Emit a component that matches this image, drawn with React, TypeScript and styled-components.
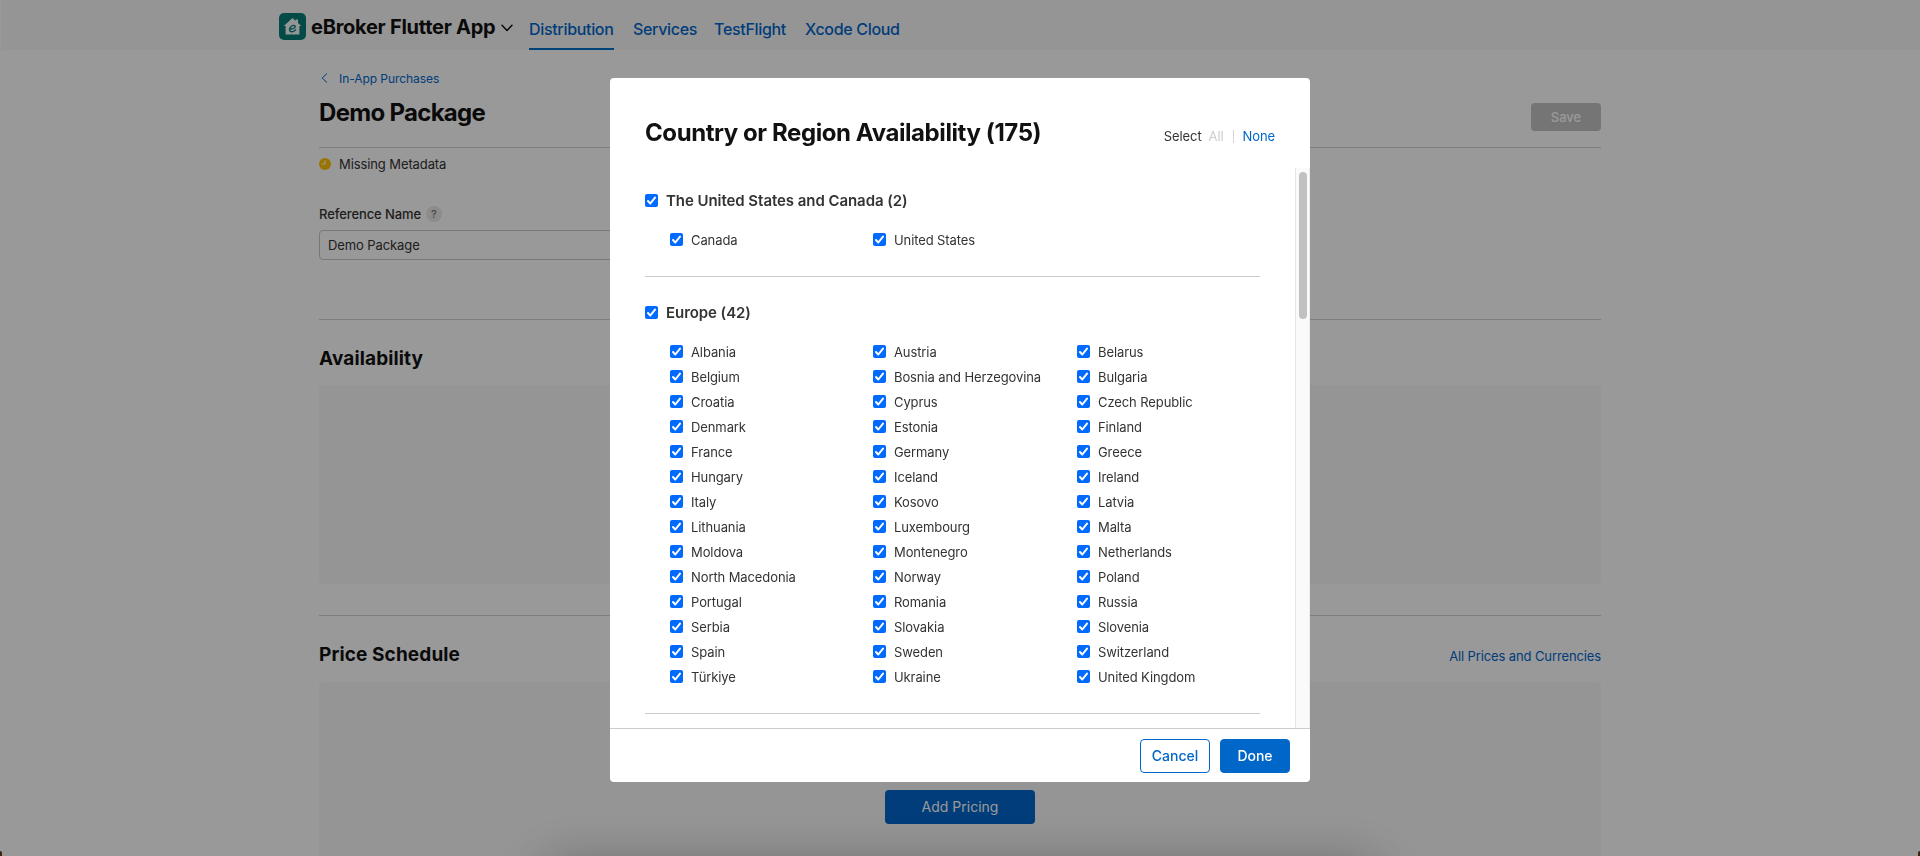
import React from 'react';
import styled, { createGlobalStyle } from 'styled-components';

const Global = createGlobalStyle`
  * { box-sizing: border-box; }
  html, body { margin: 0; padding: 0; height: 856px; overflow: hidden; background: #fff; }
  body { font-family: Inter, "Liberation Sans", sans-serif; color: #333; font-size: 13px; letter-spacing: -0.1px; }
  h1, h2, h3, p { margin: 0; }
  button { font-family: inherit; padding: 0 0 1px; }
`;

const Page = styled.div`
  height: 856px;
  overflow: hidden;
  border-left: 1px solid #fff;
`;

const Header = styled.header`
  height: 50px;
  padding-left: 278px;
  display: flex;
  background: #f9f9f9;
`;

const AppIcon = styled.svg`
  width: 27px;
  height: 27px;
  margin-top: 13px;
  flex: none;
`;

const AppName = styled.div`
  width: 184px;
  margin-left: 5px;
  padding-top: 15px;
  font-size: 20px;
  line-height: 24px;
  font-weight: 700;
  letter-spacing: -0.26px;
  color: #111;
  white-space: nowrap;
`;

const Caret = styled.svg`
  width: 12px;
  height: 8px;
  margin: 24px 0 0 6px;
`;

const Nav = styled.nav`
  display: flex;
  gap: 19px;
  margin-left: 16px;
`;

const NavLink = styled.a<{ $active?: boolean; $w: number }>`
  width: ${(p) => p.$w}px;
  height: 50px;
  padding-top: 20px;
  font-size: 16px;
  line-height: 19px;
  font-weight: 500;
  letter-spacing: -0.32px;
  white-space: nowrap;
  color: #06c;
  border-bottom: 2px solid ${(p) => (p.$active ? '#0070c9' : 'transparent')};
`;

const Content = styled.main`
  width: 1282px;
  margin-left: 318px;
`;

const Back = styled.a`
  display: flex;
  align-items: center;
  gap: 11px;
  height: 16px;
  margin-top: 20px;
  padding-left: 2px;
  font-size: 12px;
  letter-spacing: -0.06px;
  color: #06c;
`;

const TitleRow = styled.div`
  height: 62px;
  display: flex;
  justify-content: space-between;
  border-bottom: 1px solid #d0d0d0;
`;

const PageTitle = styled.h1`
  margin-top: 12px;
  font-size: 24px;
  line-height: 29px;
  font-weight: 700;
  letter-spacing: -0.7px;
  color: #111;
`;

const Save = styled.button`
  width: 70px;
  height: 28px;
  margin-top: 17px;
  border: 0;
  border-radius: 4px;
  background: #c4c4c4;
  color: #fff;
  font-size: 13px;
  font-weight: 500;
`;

const Status = styled.div`
  display: flex;
  align-items: center;
  gap: 8px;
  height: 16px;
  margin-top: 8px;
  line-height: 16px;
`;

const Label = styled.div`
  display: flex;
  align-items: center;
  gap: 5px;
  height: 16px;
  margin-top: 34px;
  font-weight: 500;
`;

const Help = styled.span`
  width: 16px;
  height: 16px;
  border-radius: 50%;
  background: #eaeaea;
  color: #777;
  font-size: 11px;
  line-height: 16px;
  text-align: center;
`;

const Field = styled.div`
  width: 628px;
  height: 30px;
  margin-top: 8px;
  padding-left: 8px;
  border: 1px solid #c8c8c8;
  border-radius: 4px;
  line-height: 29px;
`;

const Section = styled.section<{ $gap: number }>`
  margin-top: ${(p) => p.$gap}px;
  border-top: 1px solid #d0d0d0;
`;

const SectionHead = styled.div<{ $h: number }>`
  height: ${(p) => p.$h}px;
  padding-top: 27px;
  display: flex;
  justify-content: space-between;
`;

const SectionTitle = styled.h2`
  font-size: 19px;
  line-height: 24px;
  font-weight: 700;
  letter-spacing: 0.12px;
  color: #111;
`;

const PriceLink = styled.a`
  margin-top: 5px;
  line-height: 16px;
  letter-spacing: -0.12px;
  color: #06c;
`;

const Panel = styled.div<{ $h: number }>`
  height: ${(p) => p.$h}px;
  border-radius: 4px;
  background: #f9f9f9;
  display: flex;
  justify-content: center;
`;

const AddPricing = styled.button`
  width: 150px;
  height: 34px;
  margin-top: 108px;
  border: 0;
  border-radius: 4px;
  background: #06c;
  color: #fff;
  font-size: 14px;
`;

const Backdrop = styled.div`
  position: fixed;
  inset: 0;
  padding-top: 78px;
  background: rgba(0, 0, 0, 0.4);
`;

const DockShadow = styled.div`
  position: fixed;
  left: 540px;
  top: 864px;
  width: 840px;
  height: 40px;
  border-radius: 20px;
  box-shadow: 0 0 52px rgba(0, 0, 0, 0.33);
`;

const Corner = styled.div<{ $right?: boolean }>`
  position: fixed;
  bottom: 0;
  ${(p) => (p.$right ? 'right' : 'left')}: 0;
  width: 2px;
  height: 5px;
  background: #3b2410;
  border-radius: ${(p) => (p.$right ? '2px 0 0 0' : '0 2px 0 0')};
`;

const Dialog = styled.div`
  position: relative;
  width: 700px;
  height: 704px;
  margin: 0 auto;
  border-radius: 4px;
  background: #fff;
  display: flex;
  flex-direction: column;
  overflow: hidden;
`;

const DialogHead = styled.div`
  height: 90px;
  flex: none;
  padding: 40px 35px 0;
  display: flex;
  justify-content: space-between;
`;

const DialogTitle = styled.h2`
  font-size: 24px;
  line-height: 29px;
  font-weight: 700;
  letter-spacing: -0.42px;
  color: #111;
  white-space: nowrap;
`;

const Select = styled.div`
  display: flex;
  margin-top: 10px;
  line-height: 16px;
`;

const SelectAll = styled.span`
  margin-left: 7px;
  color: #ccc;
`;

const Bar = styled.span`
  width: 1px;
  height: 13px;
  margin: 2px 9px 0 9px;
  background: #d6d6d6;
`;

const SelectNone = styled.a`
  color: #06c;
`;

const Body = styled.div`
  flex: 1;
  min-height: 0;
  display: flex;
`;

const Groups = styled.div`
  flex: 1;
  overflow: hidden;
  padding: 0 35px;
`;

const Track = styled.div`
  width: 15px;
  padding: 4px 2px 0 3px;
  background: #fafafa;
  border-left: 1px solid #e6e6e6;
  border-right: 1px solid #ececec;
`;

const Thumb = styled.div`
  width: 8px;
  height: 147px;
  border-radius: 4px;
  background: #c1c1c1;
`;

const Group = styled.section`
  border-bottom: 1px solid #ccc;
  padding: 24px 0 22px;
  & + & { padding-top: 27px; }
`;

const GroupTitle = styled.h3`
  display: flex;
  align-items: center;
  gap: 8px;
  height: 17px;
  font-size: 15px;
  line-height: 17px;
  font-weight: 600;
  letter-spacing: -0.06px;
`;

const Countries = styled.div`
  display: grid;
  grid-template-columns: 203px 204px 204px;
  grid-auto-rows: 25px;
  margin-top: 20px;
  padding-left: 25px;
`;

const Item = styled.label`
  display: flex;
  gap: 8px;
  padding-top: 4px;
  line-height: 15px;
  white-space: nowrap;
`;

const Box = styled.svg`
  width: 13px;
  height: 13px;
  flex: none;
`;

const Footer = styled.footer`
  height: 54px;
  flex: none;
  padding: 10px 20px 0;
  display: flex;
  justify-content: flex-end;
  gap: 10px;
  border-top: 1px solid #ccc;
`;

const FooterButton = styled.button<{ $primary?: boolean }>`
  width: 70px;
  height: 34px;
  border: 1px solid #0066c8;
  border-radius: 4px;
  background: ${(p) => (p.$primary ? '#0066c8' : '#fff')};
  color: ${(p) => (p.$primary ? '#fff' : '#0066c8')};
  font-size: 14px;
  font-weight: 500;
`;

const Check = () => (
  <Box viewBox="0 0 13 13">
    <rect width="13" height="13" rx="2" fill="#006aff" />
    <path d="M3 7 5.3 9.5 10 3.6" fill="none" stroke="#fff" strokeWidth="2" strokeLinecap="round" strokeLinejoin="round" />
  </Box>
);

const groups = [
  { name: 'The United States and Canada (2)', items: ['Canada', 'United States'] },
  {
    name: 'Europe (42)',
    items: [
      'Albania', 'Austria', 'Belarus',
      'Belgium', 'Bosnia and Herzegovina', 'Bulgaria',
      'Croatia', 'Cyprus', 'Czech Republic',
      'Denmark', 'Estonia', 'Finland',
      'France', 'Germany', 'Greece',
      'Hungary', 'Iceland', 'Ireland',
      'Italy', 'Kosovo', 'Latvia',
      'Lithuania', 'Luxembourg', 'Malta',
      'Moldova', 'Montenegro', 'Netherlands',
      'North Macedonia', 'Norway', 'Poland',
      'Portugal', 'Romania', 'Russia',
      'Serbia', 'Slovakia', 'Slovenia',
      'Spain', 'Sweden', 'Switzerland',
      'Türkiye', 'Ukraine', 'United Kingdom',
    ],
  },
];

export default function App() {
  return (
    <>
      <Global />
      <Page>
        <Header>
          <AppIcon viewBox="0 0 27 27">
            <rect width="27" height="27" rx="5" fill="#087c76" />
            <path d="M13.5 5 4.8 13h1.8v8.5h13.8V13h1.8L19 10V6.5h-2.4V8z" fill="#f4fbfa" />
            <path d="M10.4 15.9c2.8.4 6-.7 5.9-2.4-.1-1.3-2-1.5-3.6-.5-1.8 1.2-2.8 3.6-1.7 5 1.2 1.5 4.1.6 5.6-1.2" fill="none" stroke="#087c76" strokeWidth="1.3" strokeLinecap="round" />
          </AppIcon>
          <AppName>eBroker Flutter App</AppName>
          <Caret viewBox="0 0 12 8">
            <path d="M1 1.2 6 6.4 11 1.2" fill="none" stroke="#111" strokeWidth="1.5" strokeLinecap="round" strokeLinejoin="round" />
          </Caret>
          <Nav>
            <NavLink $active $w={85}>Distribution</NavLink>
            <NavLink $w={62}>Services</NavLink>
            <NavLink $w={72}>TestFlight</NavLink>
            <NavLink $w={94}>Xcode Cloud</NavLink>
          </Nav>
        </Header>
        <Content>
          <Back>
            <svg width="7" height="10" viewBox="0 0 7 10">
              <path d="M6 .5 1.2 5 6 9.5" fill="none" stroke="#06c" strokeWidth="1" />
            </svg>
            In-App Purchases
          </Back>
          <TitleRow>
            <PageTitle>Demo Package</PageTitle>
            <Save>Save</Save>
          </TitleRow>
          <Status>
            <svg width="12" height="12" viewBox="0 0 12 12">
              <circle cx="6" cy="6" r="6" fill="#ffc400" />
              <path d="M6 2.2V6H2.6" fill="none" stroke="#fff" strokeWidth="1.1" />
            </svg>
            Missing Metadata
          </Status>
          <Label>
            Reference Name <Help>?</Help>
          </Label>
          <Field>Demo Package</Field>
          <Section $gap={59}>
            <SectionHead $h={65}>
              <SectionTitle>Availability</SectionTitle>
            </SectionHead>
            <Panel $h={199} />
          </Section>
          <Section $gap={31}>
            <SectionHead $h={66}>
              <SectionTitle>Price Schedule</SectionTitle>
              <PriceLink>All Prices and Currencies</PriceLink>
            </SectionHead>
            <Panel $h={200}>
              <AddPricing>Add Pricing</AddPricing>
            </Panel>
          </Section>
        </Content>
      </Page>
      <Backdrop>
        <Dialog role="dialog">
          <DialogHead>
            <DialogTitle>Country or Region Availability (175)</DialogTitle>
            <Select>
              Select <SelectAll>All</SelectAll>
              <Bar />
              <SelectNone>None</SelectNone>
            </Select>
          </DialogHead>
          <Body>
            <Groups>
              {groups.map((g) => (
                <Group key={g.name}>
                  <GroupTitle>
                    <Check />
                    {g.name}
                  </GroupTitle>
                  <Countries>
                    {g.items.map((c) => (
                      <Item key={c}>
                        <Check />
                        {c}
                      </Item>
                    ))}
                  </Countries>
                </Group>
              ))}
            </Groups>
            <Track>
              <Thumb />
            </Track>
          </Body>
          <Footer>
            <FooterButton>Cancel</FooterButton>
            <FooterButton $primary>Done</FooterButton>
          </Footer>
        </Dialog>
      </Backdrop>
      <DockShadow />
      <Corner />
      <Corner $right />
    </>
  );
}
